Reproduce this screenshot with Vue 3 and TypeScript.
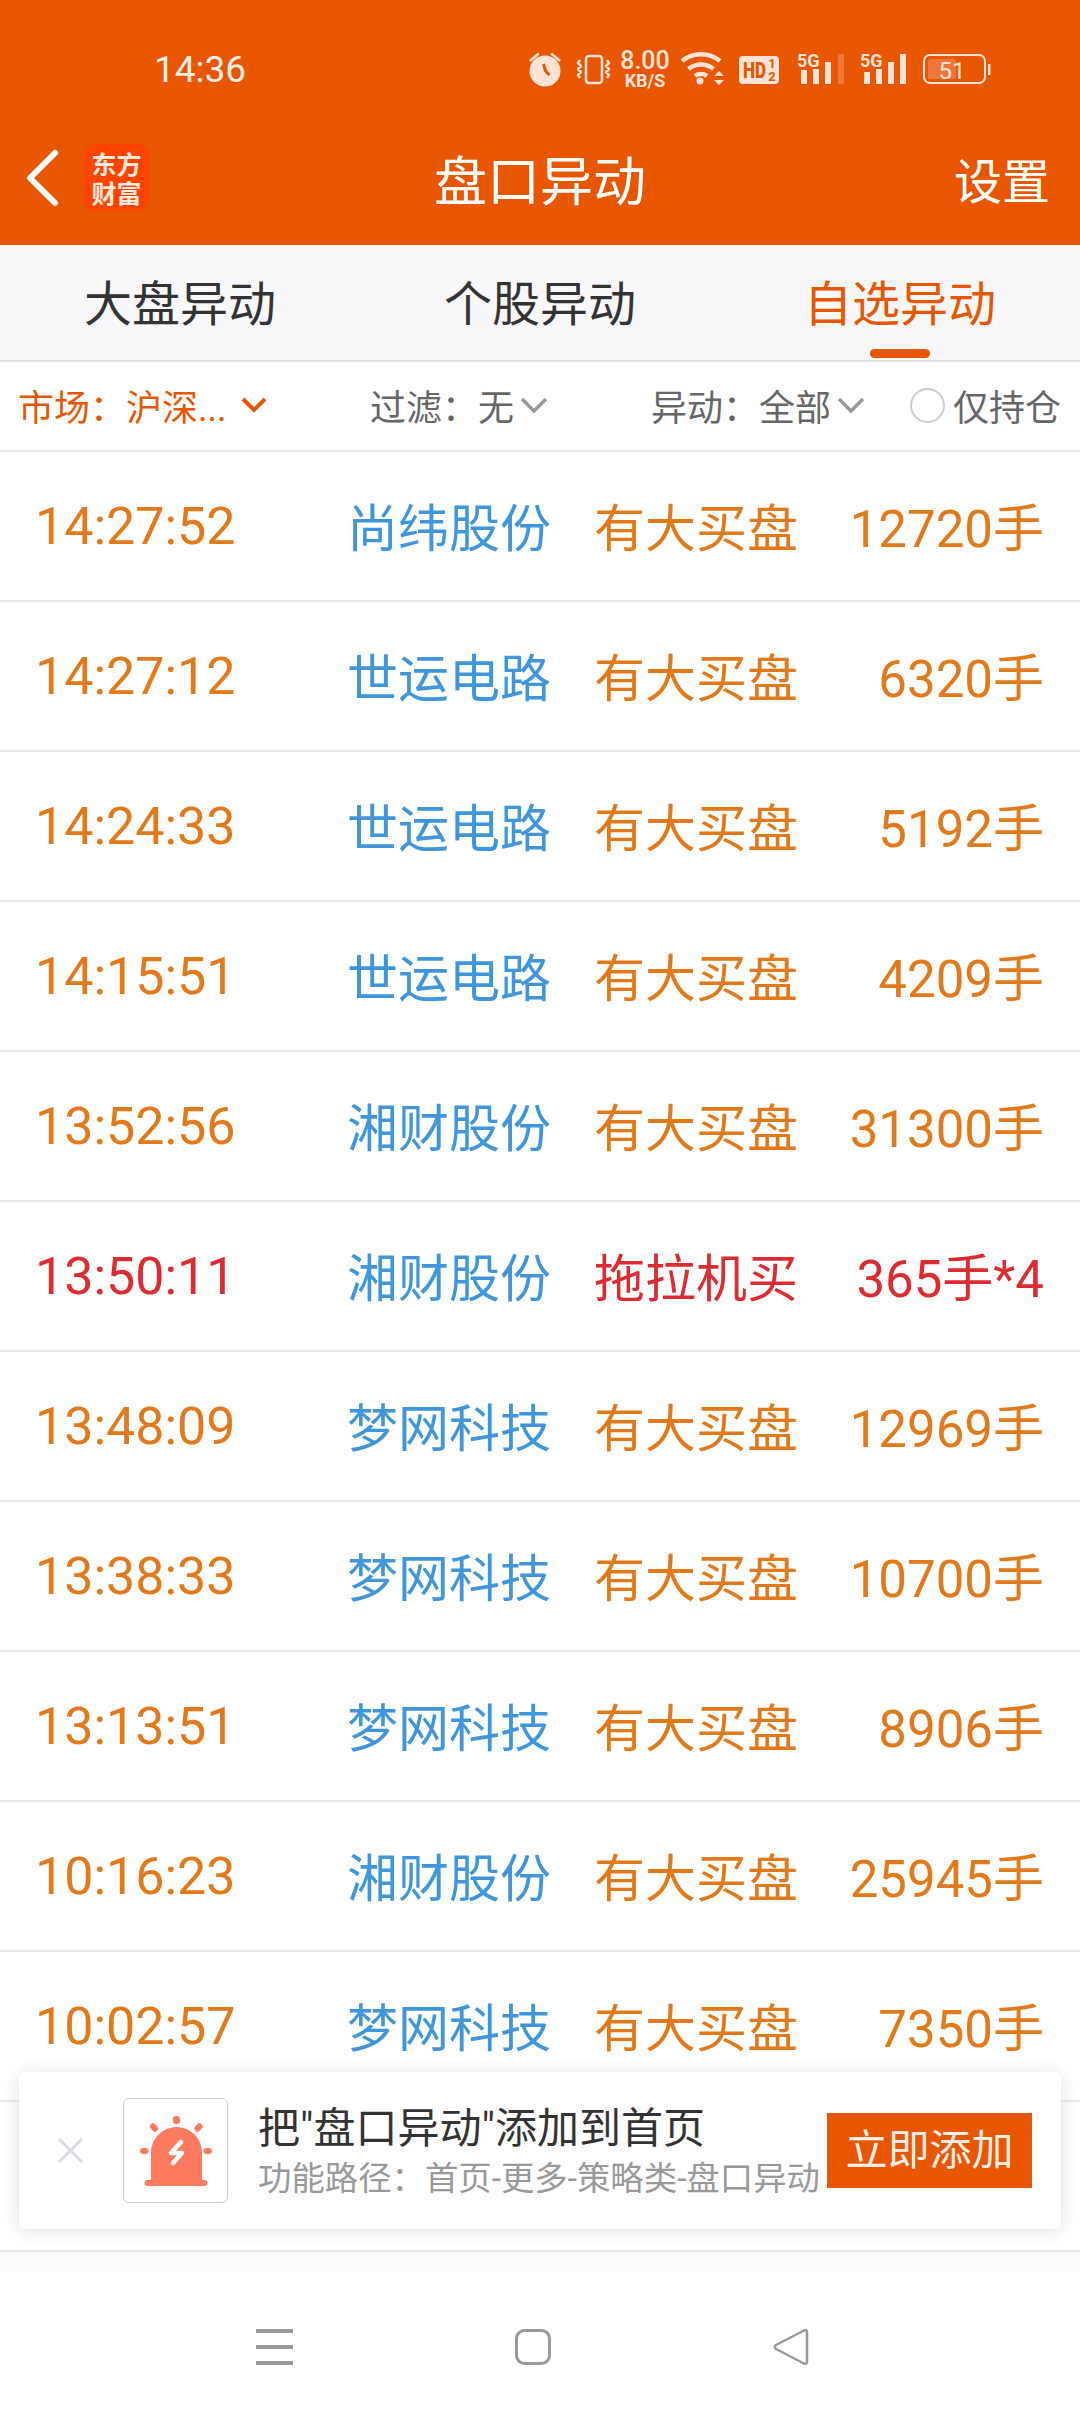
<template>
  <div class="page">
    <header class="top">
      <div class="status">
        <span class="clock">14:36</span>
        <svg class="status-icons" width="480" height="50" viewBox="520 45 480 50">
          <!-- alarm -->
          <g fill="#fde3d6">
            <circle cx="545" cy="71" r="15.500" />
            <path d="M529 60l9-7.500 1.600 2-9 7.500zM561 60l-9-7.500-1.600 2 9 7.500z" />
          </g>
          <path d="M543.500 64l2 7 4 4" fill="none" stroke="#e85600" stroke-width="3" />
          <!-- vibrate -->
          <g fill="none" stroke="#fde3d6" stroke-width="2.500" stroke-linejoin="round">
            <rect x="586" y="56" width="16" height="27" rx="3" />
            <path d="M580 60l-2 3 3 3-3 3 3 3-3 3 2 3M607 60l2 3-3 3 3 3-3 3 3 3-2 3" />
          </g>
          <!-- speed -->
          <text x="645" y="69" class="speed-num" text-anchor="middle">8.00</text>
          <text x="645" y="87" class="speed-unit" text-anchor="middle">KB/S</text>
          <!-- wifi -->
          <g fill="none" stroke="#fde3d6" stroke-width="4.500">
            <path d="M682 61a30 30 0 0 1 38 0" />
            <path d="M688.500 69a20 20 0 0 1 25 0" />
            <path d="M695 76a10 10 0 0 1 12 0" />
          </g>
          <circle cx="700" cy="81" r="3.500" fill="#fde3d6" />
          <path d="M714 76l5-5 5 5zM714 80l5 5 5-5z" fill="#fde3d6" />
          <!-- hd -->
          <rect x="739" y="56" width="40" height="28" rx="4" fill="#fde3d6" />
          <text x="743" y="78" class="hd" textLength="23" lengthAdjust="spacingAndGlyphs">HD</text>
          <text x="772" y="68" class="hd-sub" text-anchor="middle">1</text>
          <text x="772" y="81" class="hd-sub" text-anchor="middle">2</text>
          <!-- signal 1 -->
          <text x="797" y="67" class="net">5G</text>
          <g fill="#fde3d6">
            <rect x="801" y="70" width="6" height="14" />
            <rect x="813" y="69" width="6" height="15" />
            <rect x="825" y="62" width="6" height="22" />
          </g>
          <rect x="838" y="54" width="6" height="30" fill="#f0763a" />
          <!-- signal 2 -->
          <text x="860" y="67" class="net">5G</text>
          <g fill="#fde3d6">
            <rect x="864" y="72" width="6" height="12" />
            <rect x="876" y="69" width="6" height="15" />
            <rect x="888" y="62" width="6" height="22" />
            <rect x="900" y="54" width="6" height="30" />
          </g>
          <!-- battery -->
          <rect x="924" y="55" width="61" height="28" rx="6" fill="none" stroke="#fde3d6" stroke-width="2" />
          <rect x="928" y="59" width="28" height="20" rx="2" fill="#f0763a" />
          <rect x="988" y="64" width="2.500" height="11" fill="#fde3d6" />
          <text x="952" y="79" class="batt" text-anchor="middle">51</text>
        </svg>
      </div>
      <div class="bar">
        <div class="bar-left">
          <svg width="34" height="58" viewBox="0 0 34 58">
            <path d="M29 4L4 29l25 25" fill="none" stroke="#fff" stroke-width="6" stroke-linecap="round" stroke-linejoin="round" />
          </svg>
          <div class="logo"><span>东方</span><span>财富</span></div>
        </div>
        <div class="title">盘口异动</div>
        <div class="setting">设置</div>
      </div>
    </header>

    <nav class="tabs">
      <div v-for="t in tabs" :key="t" class="tab" :class="{ on: t === active }">{{ t }}</div>
    </nav>

    <div class="filters">
      <div class="f f-market">
        <span>市场：沪深...</span>
        <svg width="26" height="16" viewBox="0 0 26 16"><path d="M2 2l11 11L24 2" fill="none" stroke="#e85600" stroke-width="4" /></svg>
      </div>
      <div class="f f-filter">
        <span>过滤：无</span>
        <svg width="28" height="16" viewBox="0 0 28 16"><path d="M2 2l12 12L26 2" fill="none" stroke="#999" stroke-width="3.500" /></svg>
      </div>
      <div class="f f-type">
        <span>异动：全部</span>
        <svg width="28" height="16" viewBox="0 0 28 16"><path d="M2 2l12 12L26 2" fill="none" stroke="#999" stroke-width="3.500" /></svg>
      </div>
      <div class="f f-hold">
        <i class="radio"></i>
        <span>仅持仓</span>
      </div>
    </div>

    <ul class="list">
      <li v-for="r in rows" :key="r.time" class="row" :class="{ red: r.red }">
        <span class="c-time">{{ r.time }}</span>
        <span class="c-name">{{ r.name }}</span>
        <span class="c-type">{{ r.type }}</span>
        <span class="c-num">{{ r.num }}</span>
      </li>
    </ul>

    <div class="nav">
      <svg width="37" height="36" viewBox="0 0 37 36">
        <path d="M0 2h37M0 18h37M0 34h37" stroke="#999" stroke-width="4" />
      </svg>
      <svg width="36" height="36" viewBox="0 0 36 36">
        <rect x="1.500" y="1.500" width="33" height="33" rx="8" fill="none" stroke="#999" stroke-width="3" />
      </svg>
      <svg width="36" height="36" viewBox="0 0 36 36">
        <path d="M34 3v30q0 2.500-3 1.500L3 20q-2.500-2 0-4L31 1.500Q34 .5 34 3z" fill="none" stroke="#999" stroke-width="2.500" stroke-linejoin="round" />
      </svg>
    </div>

    <div class="popup">
      <svg class="close" width="25" height="25" viewBox="0 0 25 25">
        <path d="M1 1l23 23M24 1L1 24" stroke="#d8dbe0" stroke-width="3" />
      </svg>
      <div class="popup-icon">
        <svg width="72" height="70" viewBox="0 0 72 70" fill="#fb7a60">
          <path d="M11 66V36.500a25.500 25.500 0 0 1 51 0V66z" />
          <rect x="4.500" y="64" width="63" height="6" rx="3" />
          <rect x="33" y="0" width="7" height="8" rx="3" />
          <rect x="0" y="32" width="8.500" height="6" rx="3" />
          <rect x="63.500" y="32" width="8.500" height="6" rx="3" />
          <rect x="11" y="7" width="6" height="9" rx="2.500" transform="rotate(-45 14 11.500)" />
          <rect x="55.500" y="7" width="6" height="9" rx="2.500" transform="rotate(45 58.500 11.500)" />
          <path d="M41 26L31 37h11L33 47" fill="none" stroke="#fff" stroke-width="4.500" stroke-linecap="round" stroke-linejoin="round" />
        </svg>
      </div>
      <div class="popup-text">
        <div class="popup-title">把"盘口异动"添加到首页</div>
        <div class="popup-sub">功能路径：首页-更多-策略类-盘口异动</div>
      </div>
      <div class="popup-btn">立即添加</div>
    </div>
  </div>
</template>

<script setup lang="ts">
type Row = {
  time: string
  name: string
  type: string
  num: string
  red?: boolean
}

const tabs = ['大盘异动', '个股异动', '自选异动']
const active = '自选异动'

const rows: Row[] = [
  { time: '14:27:52', name: '尚纬股份', type: '有大买盘', num: '12720手' },
  { time: '14:27:12', name: '世运电路', type: '有大买盘', num: '6320手' },
  { time: '14:24:33', name: '世运电路', type: '有大买盘', num: '5192手' },
  { time: '14:15:51', name: '世运电路', type: '有大买盘', num: '4209手' },
  { time: '13:52:56', name: '湘财股份', type: '有大买盘', num: '31300手' },
  { time: '13:50:11', name: '湘财股份', type: '拖拉机买', num: '365手*4', red: true },
  { time: '13:48:09', name: '梦网科技', type: '有大买盘', num: '12969手' },
  { time: '13:38:33', name: '梦网科技', type: '有大买盘', num: '10700手' },
  { time: '13:13:51', name: '梦网科技', type: '有大买盘', num: '8906手' },
  { time: '10:16:23', name: '湘财股份', type: '有大买盘', num: '25945手' },
  { time: '10:02:57', name: '梦网科技', type: '有大买盘', num: '7350手' },
  { time: '', name: '', type: '', num: '' }
]
</script>

<style scoped>
.page {
  position: relative;
  width: 1080px;
  height: 2412px;
  overflow: hidden;
  background: #fff;
  display: flex;
  flex-direction: column;
  font-family: Roboto, "Noto Sans CJK SC", sans-serif;
}

.top {
  height: 245px;
  background: #e85600;
  color: #fff;
  flex: none;
}

.status {
  height: 120px;
  display: flex;
  align-items: flex-start;
  justify-content: space-between;
  padding: 45px 80px 0 154px;
  box-sizing: border-box;
}

.clock {
  font-size: 37px;
  line-height: 50px;
  color: #fdeee6;
}

.status-icons text {
  fill: #fde3d6;
  font-family: Roboto, sans-serif;
}

.status-icons .speed-num { font-size: 25px; font-weight: 500; }
.status-icons .speed-unit { font-size: 18px; font-weight: 700; }
.status-icons .hd { font-size: 22px; font-weight: 900; fill: #e85600; }
.status-icons .hd-sub { font-size: 13px; font-weight: 700; fill: #e85600; }
.status-icons .net { font-size: 18px; font-weight: 700; }
.status-icons .batt { font-size: 24px; }

.bar {
  position: relative;
  height: 115px;
  display: flex;
  align-items: center;
  justify-content: space-between;
  padding: 0 30px 0 26px;
}

.bar-left {
  display: flex;
  align-items: center;
  gap: 23px;
}

.logo {
  width: 67px;
  height: 67px;
  background: #fb4500;
  border-radius: 14px;
  display: flex;
  flex-direction: column;
  align-items: center;
  justify-content: center;
  font-size: 25px;
  line-height: 29px;
  font-weight: 700;
  color: #fde8dc;
  font-family: "Noto Sans CJK SC", sans-serif;
}

.logo span {
  display: block;
  height: 29px;
}

.title {
  position: absolute;
  left: 0;
  right: 0;
  text-align: center;
  font-size: 53px;
  pointer-events: none;
}

.setting {
  font-size: 48px;
}

.tabs {
  flex: none;
  height: 115px;
  background: #f8f8fa;
  border-bottom: 2px solid #e2e2e2;
  display: grid;
  grid-template-columns: 1fr 1fr 1fr;
}

.tab {
  position: relative;
  text-align: center;
  font-size: 48px;
  line-height: 120px;
  color: #333;
}

.tab.on {
  color: #e85600;
}

.tab.on::after {
  content: '';
  position: absolute;
  left: 50%;
  bottom: 7px;
  width: 60px;
  height: 9px;
  margin-left: -30px;
  border-radius: 5px;
  background: #e85600;
}

.filters {
  flex: none;
  height: 86px;
  padding-bottom: 2px;
  border-bottom: 2px solid #e6e6e6;
  display: flex;
  align-items: center;
  font-size: 36px;
  color: #666;
}

.f {
  display: flex;
  align-items: center;
  white-space: nowrap;
}

.f-market {
  color: #e85600;
  width: 370px;
  padding-left: 18px;
  box-sizing: border-box;
  gap: 15px;
}

.f-filter {
  width: 281px;
  gap: 6px;
}

.f-type {
  width: 259px;
  gap: 6px;
}

.radio {
  width: 31px;
  height: 31px;
  border: 2px solid #ccc;
  border-radius: 50%;
  margin-right: 8px;
}

.list {
  flex: none;
  margin: 0;
  padding: 0;
  list-style: none;
}

.row {
  height: 146px;
  padding-bottom: 2px;
  border-bottom: 2px solid #e8e8e8;
  display: flex;
  align-items: center;
  font-size: 51px;
  color: #e27a1c;
}

.row.red {
  color: #dd2b32;
}

.c-time {
  width: 347px;
  padding: 3px 0 0 35px;
  box-sizing: border-box;
  font-size: 52px;
}

.c-name {
  width: 247px;
  color: #3f96dc;
}

.c-type {
  width: 220px;
}

.c-num {
  width: 230px;
  text-align: right;
}

.nav {
  flex: 1;
  display: flex;
  align-items: center;
  gap: 222px;
  padding: 30px 0 0 256px;
  background: linear-gradient(#fcfcfc 0 20px, #fff 20px);
}

.popup {
  position: absolute;
  left: 19px;
  right: 19px;
  top: 2072px;
  height: 157px;
  background: #fff;
  border-radius: 6px;
  box-shadow: 0 2px 18px rgba(0, 0, 0, 0.12);
  display: flex;
  align-items: center;
}

.close {
  margin-left: 39px;
  flex: none;
}

.popup-icon {
  margin-left: 40px;
  width: 105px;
  height: 105px;
  box-sizing: border-box;
  border: 1px solid #ccc;
  border-radius: 6px;
  display: flex;
  align-items: center;
  justify-content: center;
  flex: none;
}

.popup-text {
  margin-left: 30px;
  width: 569px;
  white-space: nowrap;
}

.popup-title {
  font-size: 42px;
  line-height: 56px;
  color: #333;
}

.popup-sub {
  font-size: 33.400px;
  line-height: 44px;
  color: #999;
}

.popup-btn {
  width: 205px;
  height: 75px;
  background: #e85600;
  color: #fdeee6;
  font-size: 42px;
  line-height: 75px;
  text-align: center;
  flex: none;
}
</style>

<style>
html, body { margin: 0; background: #fff; }
</style>
